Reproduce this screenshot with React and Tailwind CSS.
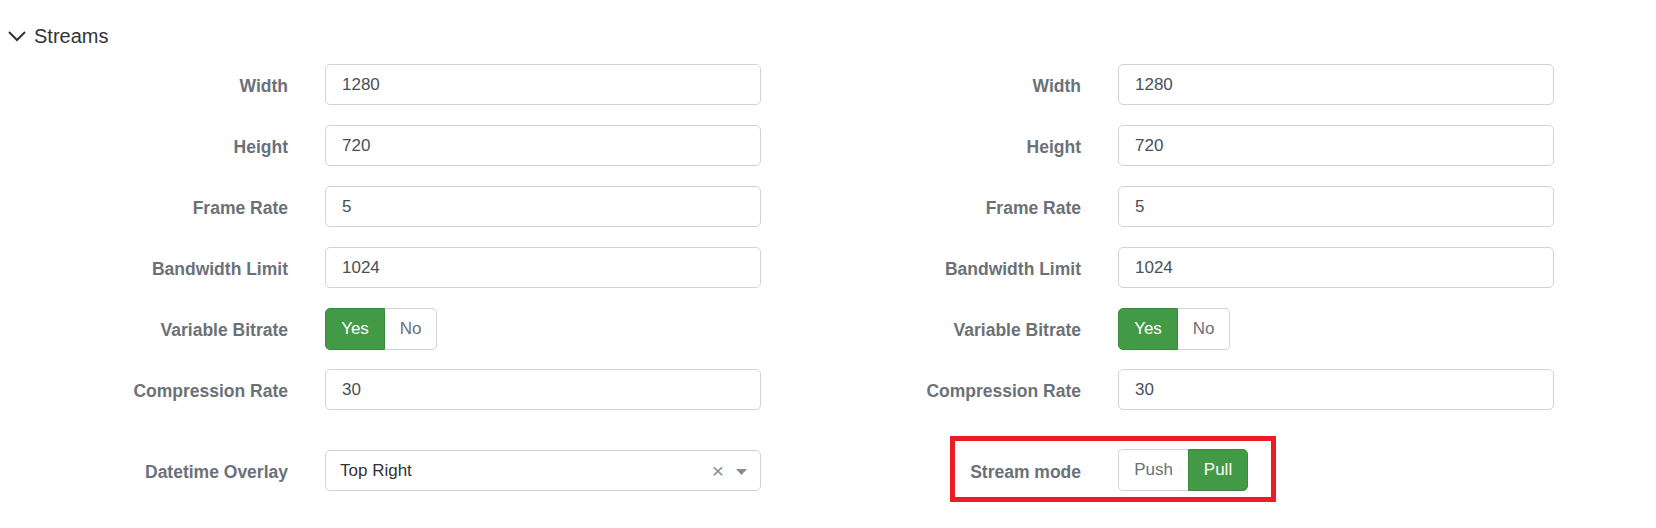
import React from 'react'

const FIELDS = [
  { label: 'Width', value: '1280' },
  { label: 'Height', value: '720' },
  { label: 'Frame Rate', value: '5' },
  { label: 'Bandwidth Limit', value: '1024' },
]

function Row({ label, children, className = '' }) {
  return (
    <div className={`flex items-center h-[41px] ${className}`}>
      <span className="w-[288px] pt-[5px] text-right text-[17.5px] font-bold text-[#6b7177] leading-none">{label}</span>
      <div className="ml-[37px] w-[436px] flex items-center">{children}</div>
    </div>
  )
}

function TextInput({ value }) {
  return (
    <div className="w-full h-[41px] border border-[#cfd4d9] rounded-[5px] px-[16px] flex items-center text-[17px] text-[#495057]">
      {value}
    </div>
  )
}

function Toggle({ options, active }) {
  return (
    <div className="flex h-[42px]">
      {options.map((o, i) => {
        const on = o.label === active
        const first = i === 0
        const last = i === options.length - 1
        return (
          <div
            key={o.label}
            className={`flex items-center justify-center text-[17px] ${o.w} ${
              on ? 'bg-[#439a46] border border-[#3b8a3e] text-white' : 'bg-white border border-[#cfd4d9] text-[#6b7177]'
            } ${first ? 'rounded-l-[5px]' : ''} ${last ? 'rounded-r-[5px]' : ''} ${!first && !on ? 'border-l-0' : ''} ${first && !on ? 'border-r-0' : ''}`}
          >
            {o.label}
          </div>
        )
      })}
    </div>
  )
}

function Column({ right }) {
  return (
    <div className="flex flex-col">
      {FIELDS.map(f => (
        <Row key={f.label} label={f.label} className="mb-[20px]">
          <TextInput value={f.value} />
        </Row>
      ))}
      <Row label="Variable Bitrate" className="mb-[20px]">
        <Toggle options={[{ label: 'Yes', w: 'w-[60px]' }, { label: 'No', w: 'w-[52px]' }]} active="Yes" />
      </Row>
      <Row label="Compression Rate">
        <TextInput value="30" />
      </Row>

      {right ? (
        <div className="relative mt-[39px]">
          <Row label="Stream mode" className="h-[42px]">
            <Toggle options={[{ label: 'Push', w: 'w-[70px]' }, { label: 'Pull', w: 'w-[60px]' }]} active="Pull" />
          </Row>
          {/* annotation box */}
          <div className="absolute left-[157px] top-[-13px] w-[326px] h-[66px] border-[5px] border-[#ed1c24] pointer-events-none" />
        </div>
      ) : (
        <Row label="Datetime Overlay" className="mt-[40px]">
          <div className="w-full h-[41px] border border-[#cfd4d9] rounded-[5px] pl-[14px] pr-[13px] flex items-center text-[17px] text-[#333]">
            <span className="flex-1">Top Right</span>
            <span className="text-[#8a8a8a] text-[21px] leading-none mr-[12px]">×</span>
            <svg width="11" height="6" viewBox="0 0 11 6" className="mt-[2px]">
              <path d="M0 0 L11 0 L5.5 6 Z" fill="#8a8a8a" />
            </svg>
          </div>
        </Row>
      )}
    </div>
  )
}

export default function App() {
  return (
    <div className="w-[1656px] h-[528px] bg-white font-['Liberation_Sans',Arial,sans-serif] overflow-hidden">
      <div className="flex items-center h-[24px] mt-[24px] pl-[8px] text-[20px] text-[#333]">
        <svg width="18" height="12" viewBox="0 0 18 12" className="mr-[8px]">
          <polyline points="1,2 9,10 17,2" fill="none" stroke="#333" strokeWidth="2" />
        </svg>
        Streams
      </div>
      <div className="grid grid-cols-[793px_793px] mt-[16px]">
        <Column />
        <Column right />
      </div>
    </div>
  )
}
